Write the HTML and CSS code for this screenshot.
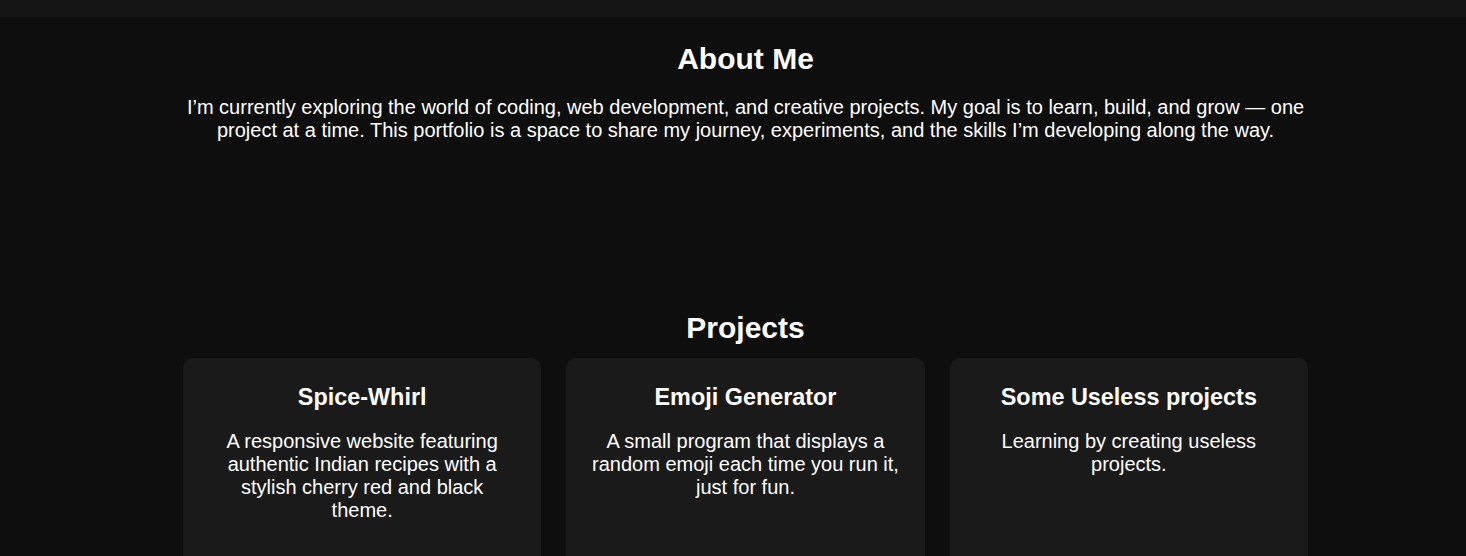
FILE: index.html
```html
<!DOCTYPE html>
<html lang="en">
<head>
<meta charset="utf-8">
<title>Portfolio</title>
<link rel="stylesheet" href="styles.css">
</head>
<body>
<header class="topbar"></header>
<main class="page">
  <section class="about">
    <h2 class="section-title">About Me</h2>
    <p class="about-text">I’m currently exploring the world of coding, web development, and creative projects. My goal is to learn, build, and grow — one project at a time. This portfolio is a space to share my journey, experiments, and the skills I’m developing along the way.</p>
  </section>
  <section class="projects">
    <h2 class="section-title">Projects</h2>
    <div class="cards">
      <article class="card">
        <h3 class="card-title">Spice-Whirl</h3>
        <p class="card-text">A responsive website featuring authentic Indian recipes with a stylish cherry red and black theme.</p>
      </article>
      <article class="card">
        <h3 class="card-title">Emoji Generator</h3>
        <p class="card-text">A small program that displays a random emoji each time you run it, just for fun.</p>
      </article>
      <article class="card">
        <h3 class="card-title">Some Useless projects</h3>
        <p class="card-text">Learning by creating useless projects.</p>
      </article>
    </div>
  </section>
</main>
</body>
</html>
```

FILE: styles.css
```css
html, body {
  margin: 0;
  padding: 0;
}
body {
  background: #0e0e0e;
  color: #ffffff;
  font-family: "Liberation Sans", Arial, sans-serif;
  font-size: 20px;
  overflow: hidden;
}
.topbar {
  height: 17px;
  background: #141414;
}
.page {
  padding-left: 25px;
}
.about,
.projects {
  max-width: 1125px;
  margin: 0 auto;
  text-align: center;
}
.about {
  padding-top: 25px;
}
.projects {
  margin-top: 169px;
}
.section-title {
  font-size: 30px;
  font-weight: bold;
  margin: 0 0 19px;
  line-height: 1.15;
}
.projects .section-title {
  margin-bottom: 13px;
}
.about-text {
  margin: 0;
  line-height: 23px;
}
.cards {
  display: grid;
  grid-template-columns: repeat(3, 1fr);
  gap: 25px;
}
.card {
  background: #1a1a1a;
  border-radius: 10px;
  padding: 26px 25px 24px;
  min-height: 260px;
}
.card-title {
  font-size: 23.4px;
  font-weight: bold;
  line-height: 1.15;
  margin: 0 0 19px;
}
.card-text {
  margin: 0;
  line-height: 23px;
}
```
